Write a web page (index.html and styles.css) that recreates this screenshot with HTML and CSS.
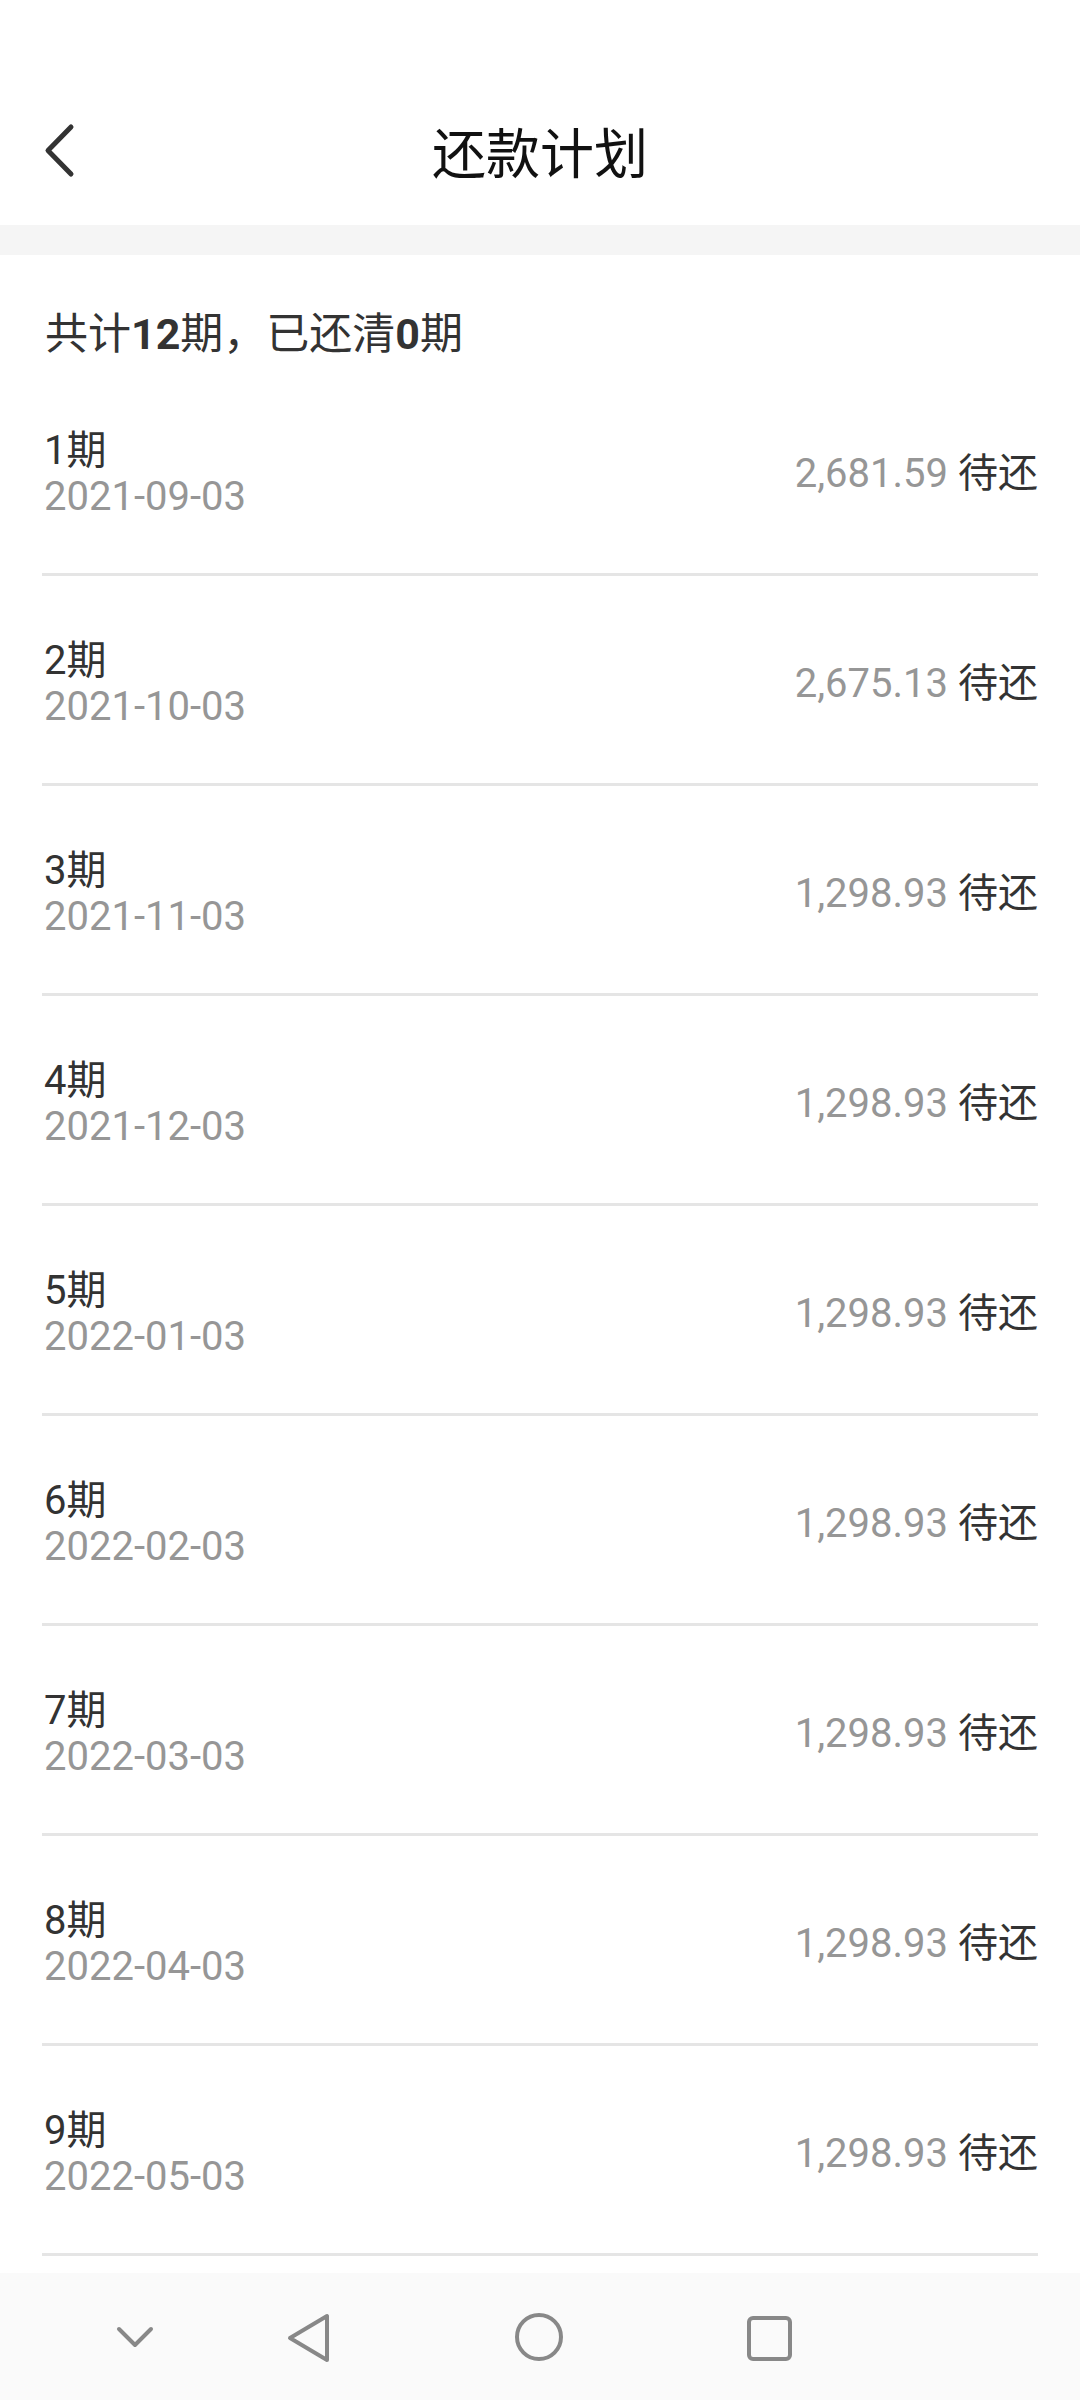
FILE: index.html
```html
<!DOCTYPE html>
<html lang="zh-CN">
<head>
    <meta charset="UTF-8">
    <meta name="viewport" content="width=device-width, initial-scale=1.0">
    <title>还款计划</title>
    <link rel="stylesheet" href="styles.css">
</head>
<body>
    <div class="screen">
        <header class="header">
            <div class="navbar">
                <div class="back">
                    <svg width="60" height="60" viewBox="0 0 60 60">
                        <polyline points="41,6 18,29.5 41,53" fill="none" stroke="#333" stroke-width="5" stroke-linecap="round" stroke-linejoin="round"/>
                    </svg>
                </div>
                <h1 class="title">还款计划</h1>
                <div></div>
            </div>
        </header>
        <div class="band"></div>

        <main class="content">
            <div class="summary">共计<b>12</b>期，已还清<b>0</b>期</div>

            <div class="row">
                <div class="period"><div class="label">1期</div><div class="date">2021-09-03</div></div>
                <div class="amount"><span class="money">2,681.59</span> 待还</div>
            </div>
            <div class="row">
                <div class="period"><div class="label">2期</div><div class="date">2021-10-03</div></div>
                <div class="amount"><span class="money">2,675.13</span> 待还</div>
            </div>
            <div class="row">
                <div class="period"><div class="label">3期</div><div class="date">2021-11-03</div></div>
                <div class="amount"><span class="money">1,298.93</span> 待还</div>
            </div>
            <div class="row">
                <div class="period"><div class="label">4期</div><div class="date">2021-12-03</div></div>
                <div class="amount"><span class="money">1,298.93</span> 待还</div>
            </div>
            <div class="row">
                <div class="period"><div class="label">5期</div><div class="date">2022-01-03</div></div>
                <div class="amount"><span class="money">1,298.93</span> 待还</div>
            </div>
            <div class="row">
                <div class="period"><div class="label">6期</div><div class="date">2022-02-03</div></div>
                <div class="amount"><span class="money">1,298.93</span> 待还</div>
            </div>
            <div class="row">
                <div class="period"><div class="label">7期</div><div class="date">2022-03-03</div></div>
                <div class="amount"><span class="money">1,298.93</span> 待还</div>
            </div>
            <div class="row">
                <div class="period"><div class="label">8期</div><div class="date">2022-04-03</div></div>
                <div class="amount"><span class="money">1,298.93</span> 待还</div>
            </div>
            <div class="row">
                <div class="period"><div class="label">9期</div><div class="date">2022-05-03</div></div>
                <div class="amount"><span class="money">1,298.93</span> 待还</div>
            </div>
        </main>

        <nav class="sysnav">
            <div class="key key-hide">
                <svg width="60" height="60" viewBox="0 0 60 60">
                    <polyline points="14,22 30,38 46,22" fill="none" stroke="#888" stroke-width="4" stroke-linecap="round" stroke-linejoin="round"/>
                </svg>
            </div>
            <div class="keys">
                <div class="key">
                    <svg width="60" height="60" viewBox="0 0 60 60">
                        <polygon points="49,9 49,53 12,31" fill="none" stroke="#888" stroke-width="4" stroke-linejoin="round"/>
                    </svg>
                </div>
                <div class="key">
                    <svg width="60" height="60" viewBox="0 0 60 60">
                        <circle cx="30" cy="30" r="22" fill="none" stroke="#888" stroke-width="4"/>
                    </svg>
                </div>
                <div class="key">
                    <svg width="60" height="60" viewBox="0 0 60 60">
                        <rect x="9" y="11" width="41" height="41" rx="4" fill="none" stroke="#888" stroke-width="4"/>
                    </svg>
                </div>
            </div>
        </nav>
    </div>
</body>
</html>
```

FILE: styles.css
```css
body {
    margin: 0;
    background: #fff;
    font-family: Roboto, "Noto Sans CJK SC", sans-serif;
    color: #333;
}
.screen {
    height: 2400px;
    display: flex;
    flex-direction: column;
    overflow: hidden;
}
.header {
    height: 225px;
    padding-top: 77px;
    box-sizing: border-box;
    flex-shrink: 0;
}
.navbar {
    height: 148px;
    display: grid;
    grid-template-columns: 1fr auto 1fr;
    align-items: center;
}
.back {
    padding-left: 30px;
    display: flex;
}
.title {
    margin: 0;
    font-family: "Noto Sans CJK SC", sans-serif;
    font-size: 54px;
    font-weight: 400;
    color: #111;
    line-height: 1;
}
.band {
    height: 30px;
    background: #f5f5f5;
    flex-shrink: 0;
}
.content {
    flex: 1;
    overflow: hidden;
}
.summary {
    font-size: 43px;
    line-height: 50px;
    padding: 54px 45px 7px;
    color: #333;
}
.summary b {
    font-weight: 700;
}
.row {
    margin: 0 42px;
    height: 210px;
    padding-top: 9px;
    box-sizing: border-box;
    border-bottom: 3px solid #e5e5e5;
    display: flex;
    justify-content: space-between;
    align-items: center;
}
.period {
    padding-left: 2px;
}
.label {
    font-size: 40px;
    line-height: 46px;
    color: #333;
}
.date {
    font-size: 40px;
    line-height: 46px;
    color: #969696;
}
.amount {
    font-size: 40px;
    line-height: 46px;
    color: #333;
}
.money {
    color: #969696;
}
.sysnav {
    height: 127px;
    flex-shrink: 0;
    background: #fafafa;
    display: flex;
    align-items: center;
    padding-left: 105px;
}
.key {
    width: 60px;
    height: 60px;
}
.key-hide {
    margin-right: 113px;
}
.keys {
    display: flex;
    gap: 171px;
}
```
